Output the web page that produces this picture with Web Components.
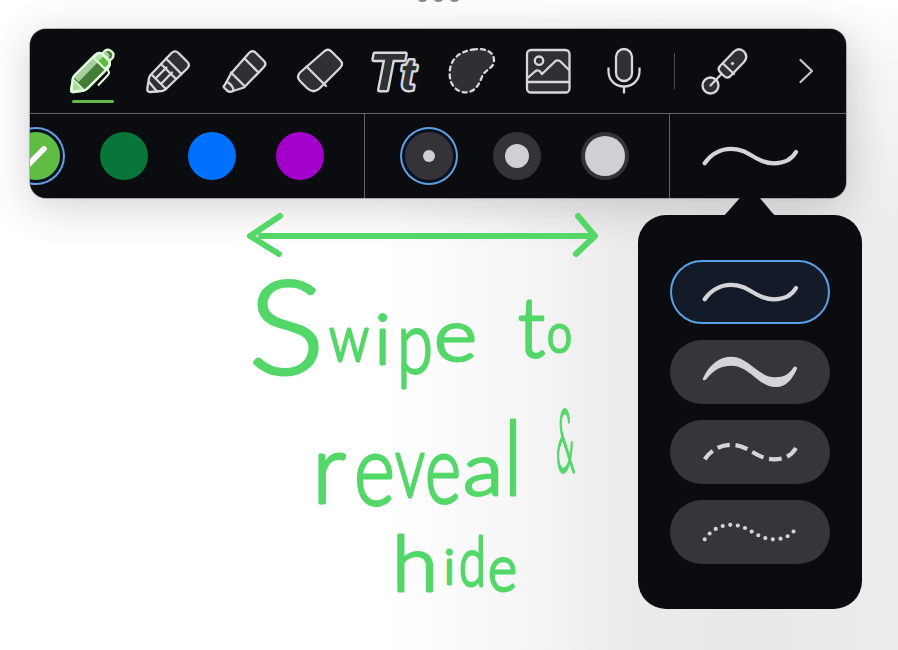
<!DOCTYPE html>
<html lang="en"><head><meta charset="utf-8"><title>Pen toolbar</title>
<style>
body{margin:0;background:#fff;font-family:"Liberation Sans",sans-serif}
</style></head><body>
<whiteboard-page></whiteboard-page>
<script>
const define=(name,html)=>customElements.define(name,class extends HTMLElement{
  constructor(){super();const t=document.createElement('template');t.innerHTML=html;this.attachShadow({mode:'open'}).append(t.content.cloneNode(true));}
});

/* Tool icons on a 48 unit grid */
const icons={
pen:`<g stroke="#e0fbd8" stroke-width="2.3"><path d="M34.5 6.500Q37.500 2 41 2.800Q47 5.500 45 10.500L42 13.500Z" fill="#457c37"/><path d="M35.500 6L38 3.500L42 9L40 11Z" fill="#a7cfa0" stroke="none"/><path d="M3.200 43L5 31Q5.500 29.500 7 28L27 8Q31 4 34.500 7.500L40.500 13.500Q43.500 17 40 21L20 41Q18 43 16 43.500L5 45Q3 45 3.200 43Z" fill="#457c37"/><path d="M6 30L27 8.500L31.500 13.500L10.500 35Z" fill="#a7cfa0" stroke="none"/><path d="M5 32L16 43L4 44Z" fill="#a5dc98" stroke-width="1.600"/><path d="M26 11L37 22L41 18Q43 15 39 11L34 7Q31 5 26 11Z" fill="#58bd40"/><path d="M27 11L32.500 7L35.500 9.500L30 14.500Z" fill="#b5e3ab" stroke="none"/><path d="M3.200 43L5 31Q5.500 29.500 7 28L27 8Q31 4 34.500 7.500L40.500 13.500Q43.500 17 40 21L20 41Q18 43 16 43.500L5 45Q3 45 3.200 43Z" fill="none"/><path d="M39.500 22L41 25.500Q41 27 39.500 28.500L30.500 38" fill="none" stroke-width="2"/></g>`,
pencil:`<path d="M3.300 42L5 31Q5.200 29.500 7 27.500L27.500 6Q31 2.800 34.500 6L43.500 15Q46.500 18 43.200 21.500L22 42Q20.500 43.700 18 44L6 45Q3 45 3.300 42Z"/><path d="M22 11.500L37.500 27M7.500 27.500L22 42M5 35L13 44.500M17 17L32 32M22.500 20.500L12 31M28 25.500L17.500 36.500" fill="none"/>`,
marker:`<path d="M4.500 38.500L11 26.500L29 6Q32.500 2.500 36 6L44 14Q47 17 43.500 20.500L24 40.500L13 44Q10 46 7 43.500L4 40.500Q3 39 4.500 38.500Z"/><path d="M24.500 11.500L38.500 25.500M11 25.500L24 38.500M8 35.500Q13 38.500 13.500 43.500" fill="none"/>`,
eraser:`<path d="M28 4.500Q32 1 35.500 4.500L44 13Q48 17 44 21L24 41Q17.500 47.500 11 41L4 34Q0 30 4 25.500Z"/><path d="M10.500 19.500L30 39" fill="none"/>`,
text:`<g font-family="Liberation Sans" font-style="italic" font-weight="700" stroke-width="4.800" paint-order="stroke"><text y="43"><tspan x="-2" font-size="52">T</tspan><tspan x="28.500" font-size="44">t</tspan></text></g>`,
lasso:`<path d="M25 2.500C36 .8 46.500 4 46 14C45.500 21 39 22 35.500 27C32 33 31 41 22.500 44.500C13 48 3.500 41 2 31C0 17 7 5 25 2.500Z" stroke-dasharray="4 3.900"/>`,
image:`<rect x="3" y="3" width="42.500" height="42.500" rx="4"/><path d="M3 31.500L11 24.500Q14 22 16.500 25L18 27L31 14.500Q34 12 37 15L45 23M3 35H45" fill="none"/><circle cx="15" cy="13.700" r="4.200"/>`,
mic:`<rect x="16" y="2" width="16" height="32" rx="8"/><path d="M8.500 20.500V24C8.500 33 15 39.500 24 39.500S39.500 33 39.500 24V20.500M24 40V46.500" fill="none" stroke-linecap="butt"/>`,
laser:`<circle cx="10.500" cy="38.500" r="8"/><path d="M10.500 38.500L21 27.500" fill="none"/><path d="M20 19L34 4.500Q39 0 44 4.500Q48.500 9.500 44 15L30 29.500Q27 32 24 29L19.500 24.500Q17.500 21.500 20 19Z"/><path d="M23.500 17L34 27" fill="none"/><circle cx="32.500" cy="16.500" r="1.200" fill="#d8d8dc" stroke-width="1"/>`,
};
customElements.define('tool-button',class extends HTMLElement{
 connectedCallback(){this.attachShadow({mode:'open'}).innerHTML=`<style>
 :host{display:flex;flex-direction:column;align-items:center;width:48px;height:57px;flex:none}
 svg{width:48px;height:48px;fill:#2f3034;stroke:#d8d8dc;stroke-width:2.300;stroke-linejoin:round;stroke-linecap:round;overflow:visible;flex:none}
 i{display:none;width:42px;height:2.600px;border-radius:2px;background:#64b74b;margin:5.500px 0 0 2px}
 :host([active]) i{display:block}</style><svg viewBox="0 0 48 48">${icons[this.getAttribute('icon')]}</svg><i></i>`;}
});
customElements.define('color-swatch',class extends HTMLElement{
 connectedCallback(){this.attachShadow({mode:'open'}).innerHTML=`<style>
 :host{display:grid;place-items:center;width:48px;height:48px;border-radius:50%;flex:none;background:${this.getAttribute('color')}}
 :host([selected]){box-shadow:0 0 0 3px #07101c,0 0 0 5px #689ee2}
 svg{display:none;width:28px;height:28px} :host([selected]) svg{display:block}</style>
 <svg viewBox="0 0 28 28"><path d="M0 16L6.500 22.500L22 6.800" fill="none" stroke="#fff" stroke-width="5.500" stroke-linecap="round"/></svg>`;}
});
customElements.define('width-dot',class extends HTMLElement{
 connectedCallback(){const d=this.getAttribute('size');this.attachShadow({mode:'open'}).innerHTML=`<style>
 :host{display:grid;place-items:center;width:48px;height:48px;border-radius:50%;background:#343438;flex:none}
 :host([selected]){box-shadow:0 0 0 3px #07101c,0 0 0 5px #5da2e8}
 b{width:${d}px;height:${d}px;border-radius:50%;background:#d0d0d4}</style><b></b>`;}
});
const wave='M2.700 27.300C9 18 19 12.800 29 12.800C47 12.800 54 27.300 72 27.300C83 27.300 90 23 94 16';
const dashPath=extra=>`<path d="${wave}" fill="none" stroke="currentColor" stroke-width="4.200" ${extra}/>`;
customElements.define('stroke-wave',class extends HTMLElement{
 connectedCallback(){const k={
  solid:dashPath('stroke-linecap="round"'),
  brush:`<path d="M1 26.300C8 11 19 4.500 29.500 4.700C47 5 57 26 73.500 25.300C82 25 87 22.500 91.300 15.500C93 13.500 95.500 14.700 95 17C90 28 83 35.500 73.500 35C56 34.500 47 13.500 29.500 13.700C18 14 11 18.500 4.500 27C2.500 29 0 28.500 1 26.300Z" fill="currentColor"/>`,
  dashed:dashPath('stroke-dasharray="12.600 5.700" stroke-dashoffset="1"'),
  dotted:dashPath('stroke-linecap="round" stroke-dasharray="0 7.600"')}[this.getAttribute('kind')];
 this.attachShadow({mode:'open'}).innerHTML=`<style>:host{display:block;width:96px;height:40px;color:#d5d5d9}svg{display:block;overflow:visible}</style><svg width="96" height="40" viewBox="0 0 96 40">${k}</svg>`;}
});
define('stroke-option',`<style>:host{display:grid;place-items:center;box-sizing:border-box;width:160px;height:64px;border-radius:32px;background:#353639}
:host([selected]){background:#131a28;border:2px solid #5b9fe6}</style><slot></slot>`);
define('stroke-popover',`<style>:host{display:flex;flex-direction:column;gap:16px;box-sizing:border-box;width:224px;height:394px;padding:45px 32px;border-radius:28px;background:#0b0c0f}
svg{position:absolute;left:85px;top:-27px}</style>
<svg width="54" height="28"><path d="M0 28Q2 27 4 24.500L23 3Q27-1 31 3L49 24.500Q51 27 54 28Z" fill="#0b0c0f"/></svg><slot></slot>`);
define('pen-toolbar',`<style>
:host{display:flex;flex-direction:column;box-sizing:border-box;width:816px;height:168.500px;border-radius:16px;background:#0b0c0f;overflow:hidden;box-shadow:0 0 0 .5px #77787a,0 8px 44px rgba(20,20,40,.2)}
.tools{display:flex;align-items:flex-start;gap:28px;height:85px;flex:none;box-sizing:border-box;padding:17.500px 0 0 38px;border-bottom:1px solid #61636b}
.sep{width:1px;height:36px;background:#4b4c53;margin:6.500px -3px 0 -2px}
.chev{margin:12.500px 0 0 22.500px;overflow:visible}
.opts{display:flex;flex:1}
.opts>div{display:flex;align-items:center;gap:40px;box-sizing:border-box;border-right:1px solid #61636b}
.colors{width:335px;overflow:hidden}.colors color-swatch:first-child{margin-left:-18px}
.widths{width:305px;padding-left:40px}
.opts .kind{flex:1;padding-left:32px;border:0}
</style>
<div class="tools"><tool-button icon="pen" active></tool-button><tool-button icon="pencil"></tool-button><tool-button icon="marker"></tool-button><tool-button icon="eraser"></tool-button><tool-button icon="text"></tool-button><tool-button icon="lasso"></tool-button><tool-button icon="image"></tool-button><tool-button icon="mic"></tool-button><span class="sep"></span><tool-button icon="laser"></tool-button><svg class="chev" width="15" height="24" viewBox="0 0 15 24"><path d="M1.500 1L13 12L1.500 23" fill="none" stroke="#c7c7cb" stroke-width="2.200" stroke-linecap="round" stroke-linejoin="round"/></svg></div>
<div class="opts"><div class="colors"><color-swatch color="#5fbd45" selected></color-swatch><color-swatch color="#087638"></color-swatch><color-swatch color="#0070ff"></color-swatch><color-swatch color="#a400cb"></color-swatch></div>
<div class="widths"><width-dot size="12" selected></width-dot><width-dot size="24"></width-dot><width-dot size="40"></width-dot></div>
<div class="kind"><stroke-wave kind="solid"></stroke-wave></div></div>`);
define('ink-note',`<style>:host{display:block}svg{display:block;overflow:visible}
text{font-family:Lato,"Open Sans",sans-serif;font-weight:300;fill:#53d769;stroke:#53d769;stroke-width:2.900;stroke-linejoin:round;stroke-linecap:round}</style>
<svg width="400" height="400" viewBox="230 206 400 400">
<path d="M280 216L250 236L279 254M261 236H594M578 216L595 236L576 254" fill="none" stroke="#53d769" stroke-width="6" stroke-linecap="round" stroke-linejoin="round"/>
<text><tspan x="248" y="374" font-size="131" textLength="77" lengthAdjust="spacingAndGlyphs">S</tspan><tspan x="329" y="361" font-size="66" textLength="40" lengthAdjust="spacingAndGlyphs">w</tspan><tspan x="375" y="364" font-size="69">i</tspan><tspan x="397" y="373" font-size="86" textLength="36" lengthAdjust="spacingAndGlyphs">p</tspan><tspan x="434" y="361" font-size="73" textLength="43" lengthAdjust="spacingAndGlyphs">e</tspan></text>
<text><tspan x="518" y="357" font-size="82" textLength="27" lengthAdjust="spacingAndGlyphs">t</tspan><tspan x="547" y="352" font-size="53" textLength="25" lengthAdjust="spacingAndGlyphs">o</tspan></text>
<text><tspan x="312" y="503" font-size="96">r</tspan><tspan x="354" y="505" font-size="98" textLength="41" lengthAdjust="spacingAndGlyphs">e</tspan><tspan x="395" y="497" font-size="86" textLength="30" lengthAdjust="spacingAndGlyphs">v</tspan><tspan x="425" y="503" font-size="94" textLength="36" lengthAdjust="spacingAndGlyphs">e</tspan><tspan x="463" y="495" font-size="73" textLength="40" lengthAdjust="spacingAndGlyphs">a</tspan><tspan x="504" y="495" font-size="102" textLength="18" lengthAdjust="spacingAndGlyphs">l</tspan></text>
<text stroke-width="2"><tspan x="556" y="472" font-size="86" textLength="19" lengthAdjust="spacingAndGlyphs">&amp;</tspan></text>
<text><tspan x="392" y="591" font-size="77" textLength="46" lengthAdjust="spacingAndGlyphs">h</tspan><tspan x="444" y="584" font-size="48">i</tspan><tspan x="459" y="586" font-size="69" textLength="27" lengthAdjust="spacingAndGlyphs">d</tspan><tspan x="488" y="591" font-size="66" textLength="29" lengthAdjust="spacingAndGlyphs">e</tspan></text>
</svg>`);
define('whiteboard-page',`<style>
:host{display:block;position:relative;width:898px;height:650px;overflow:hidden;
background:linear-gradient(to bottom,#fff 0,rgba(255,255,255,.5) 70px,rgba(255,255,255,0) 220px),linear-gradient(to right,#fff 380px,#fbfbfb 450px,#f5f5f5 530px,#ececec 620px,#e8e8e8 750px,#ededee 898px)}
.grip{display:flex;gap:5px;height:29px;padding-left:417px;box-sizing:border-box}
.grip i{width:11px;height:11px;border-radius:50%;background:#858585;margin-top:-9px}
pen-toolbar{margin-left:30px}
ink-note{margin:8.500px 0 0 230px}
stroke-popover{position:absolute;left:638px;top:215px}
</style><div class="grip"><i></i><i></i><i></i></div><pen-toolbar></pen-toolbar><ink-note></ink-note>
<stroke-popover><stroke-option selected><stroke-wave kind="solid"></stroke-wave></stroke-option><stroke-option><stroke-wave kind="brush"></stroke-wave></stroke-option><stroke-option><stroke-wave kind="dashed"></stroke-wave></stroke-option><stroke-option><stroke-wave kind="dotted"></stroke-wave></stroke-option></stroke-popover>`);
</script></body></html>
